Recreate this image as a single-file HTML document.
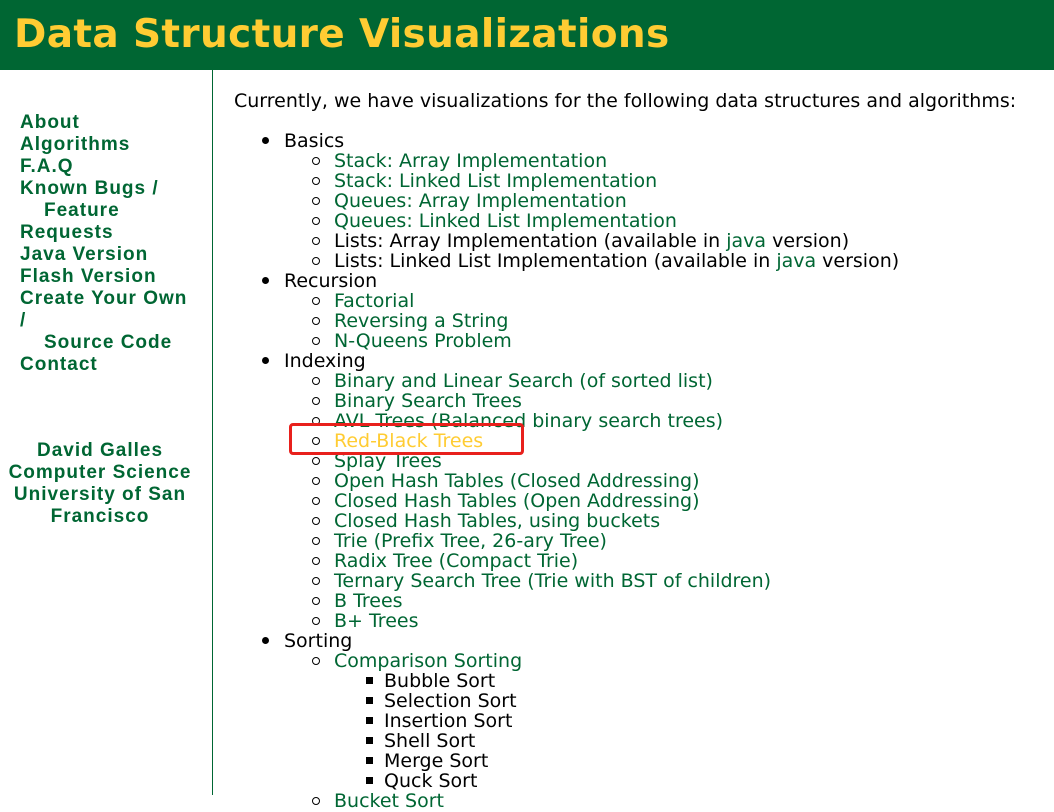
<!DOCTYPE html>
<html><head><meta charset="utf-8"><style>
body{margin:0;width:1054px;height:795px;overflow:hidden;background:#fff;font-family:"DejaVu Sans",sans-serif;position:relative}
.hd{position:absolute;left:0;top:0;width:1054px;height:70px;background:#006633}
.hd h1{margin:0;position:absolute;left:14px;top:13px;color:#ffcc33;font-size:39px;font-weight:bold;line-height:44px;letter-spacing:0.35px;font-family:"DejaVu Sans",sans-serif}
.vl{position:absolute;left:212px;top:70px;width:1px;height:725px;background:#006633}
.s{position:absolute;color:#006633;font-weight:bold;font-size:19px;line-height:22px;white-space:nowrap;font-family:"Liberation Sans",sans-serif;letter-spacing:1px}
.l{position:absolute;font-size:19px;line-height:20px;white-space:nowrap;color:#000}
.g{color:#006633}
.d{position:absolute;width:7px;height:7px;border-radius:50%;background:#000}
.c{position:absolute;width:6px;height:6px;border-radius:50%;border:1px solid #000}
.q{position:absolute;width:7px;height:7px;background:#000}
.box{position:absolute;left:289px;top:423px;width:229px;height:26px;border:3px solid #e8201c;border-radius:4px}
</style></head><body>
<div class="hd"><h1>Data Structure Visualizations</h1></div>
<div class="vl"></div>
<div class="s" style="left:20px;top:112px">About</div>
<div class="s" style="left:20px;top:134px">Algorithms</div>
<div class="s" style="left:20px;top:156px">F.A.Q</div>
<div class="s" style="left:20px;top:178px">Known Bugs /</div>
<div class="s" style="left:44px;top:200px">Feature</div>
<div class="s" style="left:20px;top:222px">Requests</div>
<div class="s" style="left:20px;top:244px">Java Version</div>
<div class="s" style="left:20px;top:266px">Flash Version</div>
<div class="s" style="left:20px;top:288px">Create Your Own</div>
<div class="s" style="left:20px;top:310px">/</div>
<div class="s" style="left:44px;top:332px">Source Code</div>
<div class="s" style="left:20px;top:354px">Contact</div>
<div class="s" style="left:0;width:200px;text-align:center;top:440px">David Galles</div>
<div class="s" style="left:0;width:200px;text-align:center;top:462px">Computer Science</div>
<div class="s" style="left:0;width:200px;text-align:center;top:484px">University of San</div>
<div class="s" style="left:0;width:200px;text-align:center;top:506px">Francisco</div>

<div class="l" style="left:234px;top:91px">Currently, we have visualizations for the following data structures and algorithms:</div>

<div class="d" style="left:262px;top:137px"></div><div class="l" style="left:284px;top:131px">Basics</div>
<div class="c" style="left:312px;top:157px"></div><div class="l g" style="left:334px;top:151px">Stack: Array Implementation</div>
<div class="c" style="left:312px;top:177px"></div><div class="l g" style="left:334px;top:171px">Stack: Linked List Implementation</div>
<div class="c" style="left:312px;top:197px"></div><div class="l g" style="left:334px;top:191px">Queues: Array Implementation</div>
<div class="c" style="left:312px;top:217px"></div><div class="l g" style="left:334px;top:211px">Queues: Linked List Implementation</div>
<div class="c" style="left:312px;top:237px"></div><div class="l" style="left:334px;top:231px">Lists: Array Implementation (available in <span class="g">java</span> version)</div>
<div class="c" style="left:312px;top:257px"></div><div class="l" style="left:334px;top:251px">Lists: Linked List Implementation (available in <span class="g">java</span> version)</div>
<div class="d" style="left:262px;top:277px"></div><div class="l" style="left:284px;top:271px">Recursion</div>
<div class="c" style="left:312px;top:297px"></div><div class="l g" style="left:334px;top:291px">Factorial</div>
<div class="c" style="left:312px;top:317px"></div><div class="l g" style="left:334px;top:311px">Reversing a String</div>
<div class="c" style="left:312px;top:337px"></div><div class="l g" style="left:334px;top:331px">N-Queens Problem</div>
<div class="d" style="left:262px;top:357px"></div><div class="l" style="left:284px;top:351px">Indexing</div>
<div class="c" style="left:312px;top:377px"></div><div class="l g" style="left:334px;top:371px">Binary and Linear Search (of sorted list)</div>
<div class="c" style="left:312px;top:397px"></div><div class="l g" style="left:334px;top:391px">Binary Search Trees</div>
<div class="c" style="left:312px;top:417px"></div><div class="l g" style="left:334px;top:411px">AVL Trees (Balanced binary search trees)</div>
<div class="c" style="left:312px;top:437px"></div><div class="l" style="left:334px;top:431px;color:#ffcc33">Red-Black Trees</div>
<div class="c" style="left:312px;top:457px"></div><div class="l g" style="left:334px;top:451px">Splay Trees</div>
<div class="c" style="left:312px;top:477px"></div><div class="l g" style="left:334px;top:471px">Open Hash Tables (Closed Addressing)</div>
<div class="c" style="left:312px;top:497px"></div><div class="l g" style="left:334px;top:491px">Closed Hash Tables (Open Addressing)</div>
<div class="c" style="left:312px;top:517px"></div><div class="l g" style="left:334px;top:511px">Closed Hash Tables, using buckets</div>
<div class="c" style="left:312px;top:537px"></div><div class="l g" style="left:334px;top:531px">Trie (Prefix Tree, 26-ary Tree)</div>
<div class="c" style="left:312px;top:557px"></div><div class="l g" style="left:334px;top:551px">Radix Tree (Compact Trie)</div>
<div class="c" style="left:312px;top:577px"></div><div class="l g" style="left:334px;top:571px">Ternary Search Tree (Trie with BST of children)</div>
<div class="c" style="left:312px;top:597px"></div><div class="l g" style="left:334px;top:591px">B Trees</div>
<div class="c" style="left:312px;top:617px"></div><div class="l g" style="left:334px;top:611px">B+ Trees</div>
<div class="d" style="left:262px;top:637px"></div><div class="l" style="left:284px;top:631px">Sorting</div>
<div class="c" style="left:312px;top:657px"></div><div class="l g" style="left:334px;top:651px">Comparison Sorting</div>
<div class="q" style="left:366px;top:677px"></div><div class="l" style="left:384px;top:671px">Bubble Sort</div>
<div class="q" style="left:366px;top:697px"></div><div class="l" style="left:384px;top:691px">Selection Sort</div>
<div class="q" style="left:366px;top:717px"></div><div class="l" style="left:384px;top:711px">Insertion Sort</div>
<div class="q" style="left:366px;top:737px"></div><div class="l" style="left:384px;top:731px">Shell Sort</div>
<div class="q" style="left:366px;top:757px"></div><div class="l" style="left:384px;top:751px">Merge Sort</div>
<div class="q" style="left:366px;top:777px"></div><div class="l" style="left:384px;top:771px">Quck Sort</div>
<div class="c" style="left:312px;top:797px"></div><div class="l g" style="left:334px;top:791px">Bucket Sort</div>
<div class="box"></div>
</body></html>
